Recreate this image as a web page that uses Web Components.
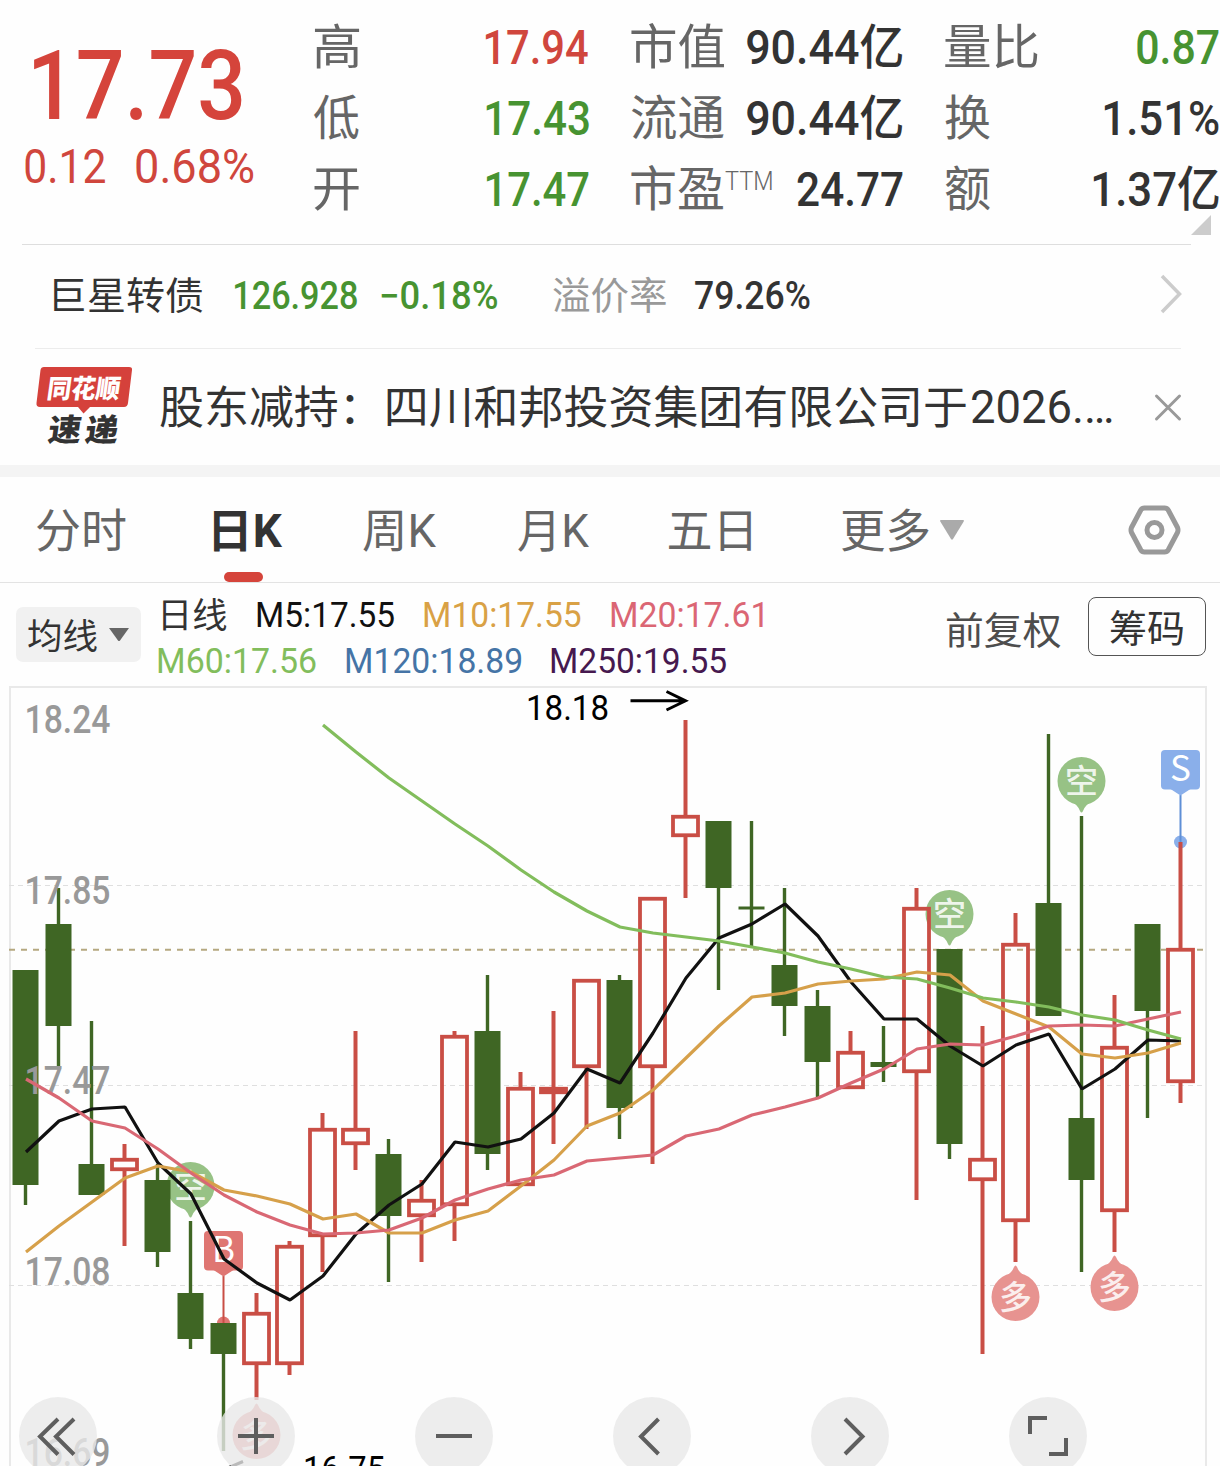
<!DOCTYPE html>
<html lang="zh-CN">
<head>
<meta charset="utf-8">
<title>日K</title>
<style>
  body {
    margin: 0;
    width: 1220px;
    height: 1466px;
    overflow: hidden;
    background: #fefefe;
    color: #333;
    font-family: Roboto, "Noto Sans CJK SC", sans-serif;
  }
</style>
</head>
<body>
<stock-page></stock-page>

<script>
/**
 * Creates a template element.
 *
 * @param {string} html - The markup of the template.
 * @returns {HTMLTemplateElement} The template.
 */
const createTemplate = (html) => {
  const template = document.createElement('template')
  template.innerHTML = html
  return template
}

const measureContext = document.createElement('canvas').getContext('2d')

/*
 * Text condensed or expanded to a given ink width.
 */
const fitTextTemplate = createTemplate(`
<style>
  :host { display: block; flex: none; white-space: nowrap; }
  span { display: inline-block; transform-origin: 0 50%; }
</style>
<span><slot></slot></span>
`)

customElements.define('fit-text',
  class extends HTMLElement {
    constructor () {
      super()
      this.attachShadow({ mode: 'open' })
      this.shadowRoot.appendChild(fitTextTemplate.content.cloneNode(true))
    }

    connectedCallback () {
      const style = getComputedStyle(this)
      measureContext.font = `${style.fontStyle} ${style.fontWeight} ${style.fontSize} ${style.fontFamily}`
      const metrics = measureContext.measureText(this.textContent)
      const ink = metrics.actualBoundingBoxLeft + metrics.actualBoundingBoxRight
      const width = Number(this.getAttribute('w'))
      const scale = width / ink
      this.style.width = `${width}px`
      this.shadowRoot.querySelector('span').style.transform =
        `translateX(${metrics.actualBoundingBoxLeft * scale}px) scaleX(${scale})`
    }
  })

/*
 * One label and value pair of the quote header.
 */
const statItemTemplate = createTemplate(`
<style>
  :host { display: flex; justify-content: space-between; height: 71px; line-height: 71px; font-size: 48px; font-weight: 500; color: #333; }
  :host([trend="up"]) { color: #d0463d; }
  :host([trend="down"]) { color: #479331; }
  .label { display: flex; color: #666; font-weight: 400; }
</style>
<div class="label"><slot name="label"></slot></div>
<slot></slot>
`)

customElements.define('stat-item',
  class extends HTMLElement {
    constructor () {
      super()
      this.attachShadow({ mode: 'open' })
      this.shadowRoot.appendChild(statItemTemplate.content.cloneNode(true))
    }
  })

/*
 * Price and key figures.
 */
const quoteHeaderTemplate = createTemplate(`
<style>
  :host { display: flex; height: 244px; position: relative; }
  .price { flex: none; width: 314px; color: #d0463d; }
  .last { margin-left: 34px; padding-top: 26px; height: 104px; line-height: 120px; font-size: 97px; font-weight: 500; color: #d5443b; }
  .change { display: flex; gap: 30px; padding-left: 25px; margin-top: 1px; line-height: 71px; font-size: 48px; font-weight: 450; }
  .col { flex: none; padding-top: 12px; width: 274.5px; margin-right: 42px; }
  .col:nth-of-type(3) { width: 272px; }
  .col:nth-of-type(4) { margin-right: 0; width: 274px; }
  .ttm { font-size: 25px; font-weight: 300; margin-left: 2px; line-height: 56px; }
  .corner { position: absolute; right: 9px; bottom: 9px; width: 20px; height: 20px; background: #ccc; clip-path: polygon(100% 0, 100% 100%, 0 100%); }
</style>
<div class="price">
  <div class="last"><fit-text w="207.5">17.73</fit-text></div>
  <div class="change"><fit-text w="80.5">0.12</fit-text><fit-text w="118">0.68%</fit-text></div>
</div>
<div class="col">
  <stat-item trend="up"><fit-text slot="label" w="45">高</fit-text><fit-text w="103.5">17.94</fit-text></stat-item>
  <stat-item trend="down"><fit-text slot="label" w="45">低</fit-text><fit-text w="103">17.43</fit-text></stat-item>
  <stat-item trend="down"><fit-text slot="label" w="45">开</fit-text><fit-text w="103">17.47</fit-text></stat-item>
</div>
<div class="col">
  <stat-item><fit-text slot="label" w="93">市值</fit-text><fit-text w="155.5">90.44亿</fit-text></stat-item>
  <stat-item><fit-text slot="label" w="93">流通</fit-text><fit-text w="155.5">90.44亿</fit-text></stat-item>
  <stat-item><fit-text slot="label" w="92">市盈</fit-text><fit-text slot="label" class="ttm" w="47">TTM</fit-text><fit-text w="106">24.77</fit-text></stat-item>
</div>
<div class="col">
  <stat-item trend="down"><fit-text slot="label" w="93">量比</fit-text><fit-text w="82">0.87</fit-text></stat-item>
  <stat-item><fit-text slot="label" w="45">换</fit-text><fit-text w="115">1.51%</fit-text></stat-item>
  <stat-item><fit-text slot="label" w="45">额</fit-text><fit-text w="126">1.37亿</fit-text></stat-item>
</div>
<div class="corner"></div>
`)

customElements.define('quote-header',
  class extends HTMLElement {
    constructor () {
      super()
      this.attachShadow({ mode: 'open' })
      this.shadowRoot.appendChild(quoteHeaderTemplate.content.cloneNode(true))
    }
  })

/*
 * Convertible bond row.
 */
const bondRowTemplate = createTemplate(`
<style>
  :host { display: flex; align-items: center; height: 103px; margin: 0 29px 0 22px; padding-left: 32px; border-top: 1px solid #dedede; line-height: 103px; font-size: 38px; color: #333; }
  .down { color: #479331; font-weight: 500; }
  .muted { color: #999; margin-left: 55px; }
  .rate { font-weight: 500; margin-left: 29px; }
  svg { margin-left: auto; margin-right: 8px; margin-top: -6px; }
</style>
<fit-text w="149">巨星转债</fit-text>
<fit-text class="down" w="122" style="margin-left: 32px">126.928</fit-text>
<fit-text class="down" w="116.5" style="margin-left: 24px">−0.18%</fit-text>
<fit-text class="muted" w="113.5">溢价率</fit-text>
<fit-text class="rate" w="115">79.26%</fit-text>
<svg width="24" height="40" viewBox="0 0 24 40" fill="none" stroke="#ccc" stroke-width="3.5"><path d="M3 2 20.500 20 3 38"/></svg>
`)

customElements.define('bond-row',
  class extends HTMLElement {
    constructor () {
      super()
      this.attachShadow({ mode: 'open' })
      this.shadowRoot.appendChild(bondRowTemplate.content.cloneNode(true))
    }
  })

/*
 * News row with the express logo.
 */
const newsRowTemplate = createTemplate(`
<style>
  :host { display: block; border-bottom: 12px solid #f4f4f4; }
  .row { display: flex; height: 116px; margin: 0 39px 0 35px; border-top: 1px solid #ececec; line-height: 116px; font-size: 45.5px; color: #333; }
  .logo { width: 97px; margin-right: 28px; padding-top: 18px; }
  .cjk { font-size: 45px; padding-top: 2px; }
  .date { margin-left: 6px; padding-top: 1px; }
  .close { margin-left: auto; align-self: center; }
  svg { display: block; overflow: visible; }
</style>
<div class="row">
  <div class="logo">
    <svg width="97" height="92" viewBox="35 367 97 92" font-family="Noto Sans CJK SC" font-weight="900">
      <path fill="#d5413b" d="M44 367H129Q132.500 367 132 370L128 403Q127.500 407 124 407H90L83.500 413.500 78 407H40Q36 407 36.500 403L40.500 370Q41 367 44 367Z"/>
      <text transform="translate(46 397.500) skewX(-8)" font-size="26" fill="#fff" textLength="73" lengthAdjust="spacingAndGlyphs">同花顺</text>
      <text transform="translate(47 441) skewX(-8)" font-size="31" fill="#333" textLength="33" lengthAdjust="spacingAndGlyphs">速</text>
      <text transform="translate(84 441) skewX(-8)" font-size="31" fill="#333" textLength="33" lengthAdjust="spacingAndGlyphs">递</text>
    </svg>
  </div>
  <fit-text class="cjk" w="806">股东减持：四川和邦投资集团有限公司于</fit-text>
  <fit-text class="date" w="140">2026.…</fit-text>
  <svg class="close" width="26" height="27" viewBox="0 0 26 27" stroke="#999" stroke-width="3" stroke-linecap="round"><path d="M1.500 2 24.500 25M24.500 2 1.500 25"/></svg>
</div>
`)

customElements.define('news-row',
  class extends HTMLElement {
    constructor () {
      super()
      this.attachShadow({ mode: 'open' })
      this.shadowRoot.appendChild(newsRowTemplate.content.cloneNode(true))
    }
  })

/*
 * Period tabs.
 */
const periodTabsTemplate = createTemplate(`
<style>
  :host { display: flex; height: 105px; padding: 0 39px 0 37px; border-bottom: 1px solid #e3e3e3; box-sizing: content-box; line-height: 109px; font-size: 46px; color: #666; }
  .active { position: relative; margin: 0 80px 0 88px; color: #333; font-weight: 700; }
  .active::after { content: ""; position: absolute; left: 10px; bottom: 0; width: 39px; height: 10px; border-radius: 5px; background: #d5443b; }
  svg { display: block; }
  .caret { margin: 43px 0 0 11px; }
  .gear { margin: 27px 0 0 auto; }
</style>
<fit-text w="89">分时</fit-text>
<div class="active"><fit-text w="68.5">日K</fit-text></div>
<fit-text w="73">周K</fit-text>
<fit-text w="71" style="margin-left: 82px">月K</fit-text>
<fit-text w="83" style="margin-left: 80px">五日</fit-text>
<fit-text w="87" style="margin-left: 90px">更多</fit-text>
<svg class="caret" width="24" height="20" viewBox="0 0 24 20"><path d="M1 0H23Q24.500 0 23.700 1.500L13 19Q12 20.500 11 19L.3 1.500Q-.5 0 1 0Z" fill="#aaa"/></svg>
<svg class="gear" width="53" height="52" viewBox="0 0 53 52" fill="none" stroke="#999" stroke-width="5" stroke-linejoin="round">
  <path d="M16.500 4H36.500Q39 4 40.200 6L49.500 23.500Q50.500 26 49.500 28.500L40.200 46Q39 48 36.500 48H16.500Q14 48 12.800 46L3.500 28.500Q2.500 26 3.500 23.500L12.800 6Q14 4 16.500 4Z"/>
  <circle cx="26.500" cy="26" r="7.500"/>
</svg>
`)

customElements.define('period-tabs',
  class extends HTMLElement {
    constructor () {
      super()
      this.attachShadow({ mode: 'open' })
      this.shadowRoot.appendChild(periodTabsTemplate.content.cloneNode(true))
    }
  })

/*
 * Moving average legend with its buttons.
 */
const averageBarTemplate = createTemplate(`
<style>
  :host { display: flex; height: 103px; padding: 0 14px 0 16px; font-size: 35px; color: #333; }
  .pick { display: flex; align-items: center; box-sizing: border-box; width: 125px; height: 55px; margin-top: 24px; padding: 0 12px; gap: 12px; border-radius: 7px; background: #f1f1f1; }
  .pick fit-text { line-height: 49px; padding-top: 6px; }
  .legend { width: 788px; padding: 10px 0 0 17px; line-height: 45px; }
  .legend div { display: flex; gap: 30px; font-weight: 450; }
  .name { margin-left: 5px; padding-top: 1px; font-weight: 400; }
  .adjust { margin: 16px 28px 0 1px; line-height: 64px; font-size: 38px; color: #4d4d4d; }
  .chips { box-sizing: border-box; width: 118px; height: 59px; margin-top: 14px; padding-left: 21px; border: 1px solid #555; border-radius: 8px; line-height: 62px; font-size: 38px; }
</style>
<div class="pick"><fit-text w="69">均线</fit-text><svg width="20" height="13" viewBox="0 0 20 13"><path d="M0 0H20L11 12.500Q10 13.500 9 12.500Z" fill="#666"/></svg></div>
<div class="legend">
  <div>
    <fit-text class="name" w="63.5">日线</fit-text>
    <fit-text w="137.500" style="color: #111">M5:17.55</fit-text>
    <fit-text w="157" style="color: #d9a145">M10:17.55</fit-text>
    <fit-text w="152" style="color: #db6674">M20:17.61</fit-text>
  </div>
  <div>
    <fit-text w="157.500" style="color: #82bd5c">M60:17.56</fit-text>
    <fit-text w="175.500" style="color: #4574a6">M120:18.89</fit-text>
    <fit-text w="175.500" style="color: #46194f">M250:19.55</fit-text>
  </div>
</div>
<fit-text class="adjust" w="113.5">前复权</fit-text>
<div class="chips"><fit-text w="73">筹码</fit-text></div>
`)

customElements.define('average-bar',
  class extends HTMLElement {
    constructor () {
      super()
      this.attachShadow({ mode: 'open' })
      this.shadowRoot.appendChild(averageBarTemplate.content.cloneNode(true))
    }
  })

// Candles from left to right: kind, high, body top, body bottom, low.
const CANDLES = [
  ['g', 970, 970, 1185, 1205], ['g', 888, 924, 1026, 1067], ['g', 1021, 1164, 1195, 1195],
  ['r', 1144, 1158, 1171, 1246], ['g', 1164, 1180, 1252, 1267], ['g', 1221, 1293, 1339, 1349],
  ['g', 1323, 1323, 1354, 1451], ['r', 1293, 1312, 1365, 1400], ['r', 1241, 1245, 1365, 1375],
  ['r', 1113, 1128, 1237, 1272], ['r', 1031, 1128, 1145, 1170], ['g', 1139, 1154, 1216, 1282],
  ['r', 1180, 1199, 1217, 1262], ['r', 1031, 1035, 1206, 1241], ['g', 975, 1031, 1154, 1170],
  ['r', 1072, 1087, 1186, 1186], ['r', 1011, 1087, 1094, 1144], ['r', 979, 979, 1068, 1129],
  ['g', 975, 980, 1108, 1139], ['r', 897, 897, 1068, 1164], ['r', 720, 815, 837, 898],
  ['g', 821, 821, 888, 990], ['g', 821, 906.5, 909.5, 947], ['g', 888, 965, 1006, 1036],
  ['g', 990, 1006, 1062, 1098], ['r', 1031, 1051, 1089, 1089], ['g', 1026, 1062, 1067, 1082],
  ['r', 888, 907, 1073, 1200], ['g', 949, 949, 1144, 1159], ['r', 1026, 1158, 1181, 1354],
  ['r', 913, 943, 1222, 1262], ['g', 734, 903, 1016, 1016], ['g', 816, 1118, 1180, 1272],
  ['r', 995, 1046, 1212, 1252], ['g', 924, 924, 1011, 1118], ['r', 842, 948, 1083, 1103]
]

// Moving averages: colour, first candle, values.
const AVERAGES = [
  ['#111', 0, [1152, 1121, 1109, 1107, 1163, 1194, 1259, 1283, 1300, 1276, 1234, 1205, 1184, 1142, 1147, 1139, 1113, 1069, 1083, 1033, 978, 938, 924, 904, 936, 982, 1019, 1019, 1046, 1066, 1045, 1034, 1089, 1069, 1040, 1041]],
  ['#d6a04a', 0, [1252, 1226, 1202, 1178, 1166, 1172, 1190, 1196, 1204, 1219, 1214, 1233, 1233, 1220, 1211, 1186, 1160, 1126, 1113, 1090, 1058, 1026, 997, 993, 984, 981, 979, 972, 975, 1001, 1014, 1027, 1054, 1058, 1053, 1043]],
  ['#d96874', 0, [1079, 1098, 1121, 1128, 1149, 1173, 1195, 1212, 1225, 1234, 1233, 1230, 1218, 1200, 1189, 1180, 1175, 1161, 1158, 1155, 1136, 1129, 1115, 1107, 1098, 1083, 1069, 1049, 1044, 1045, 1036, 1026, 1025, 1026, 1019, 1012]],
  ['#82bd5c', 9, [725, 752, 778, 801, 824, 846, 870, 892, 911, 927, 933, 937, 941, 947, 953, 962, 969, 977, 979, 988, 998, 1002, 1007, 1015, 1020, 1030, 1039]]
]

/**
 * Gets the centre of a candle.
 *
 * @param {number} index - The index of the candle.
 * @returns {number} The x coordinate.
 */
const centerOf = (index) => 25.5 + index * 33

/**
 * Draws one candle.
 *
 * @param {Array} candle - Kind, high, top, bottom and low.
 * @param {number} index - The index of the candle.
 * @returns {string} The svg markup.
 */
const drawCandle = ([kind, high, top, bottom, low], index) => {
  const x = centerOf(index)
  if (kind === 'g') {
    return `<path d="M${x} ${high}V${low}" stroke="#3f6624" stroke-width="3.400"/><rect x="${x - 13}" y="${top}" width="26" height="${bottom - top}" fill="#3f6624"/>`
  }
  return `<path d="M${x} ${high}V${top}M${x} ${bottom}V${low}" stroke="#c94e45" stroke-width="4"/><rect x="${x - 12.5}" y="${top + 1.75}" width="25" height="${bottom - top - 3.5}" fill="none" stroke="#c94e45" stroke-width="3.800"/>`
}

/**
 * Draws a signal pin, pointing down for short and up for long.
 *
 * @param {number} x - The centre.
 * @param {number} y - The centre.
 * @param {string} text - The character in the pin.
 * @returns {string} The svg markup.
 */
const drawPin = (x, y, text) => {
  const dir = text === '空' ? 1 : -1
  const fill = dir === 1 ? '#97c285' : '#e79390'
  return `<circle cx="${x}" cy="${y}" r="24" fill="${fill}"/>
    <path transform="translate(${x} ${y}) scale(1 ${dir})" d="M-13 19Q-4 23-1.500 30Q0 33 1.500 30Q4 23 13 19Z" fill="${fill}"/>
    <text x="${x}" y="${y + 12}" text-anchor="middle" font-family="Noto Sans CJK SC" font-weight="500" font-size="33" fill="#fff" fill-opacity=".85">${text}</text>`
}

/**
 * Draws a trade flag with its stem and dot.
 *
 * @param {number} x - The centre.
 * @param {number} y - The top.
 * @param {number} dot - The y coordinate of the dot.
 * @param {string} text - The letter.
 * @param {string} fill - The colour of the flag.
 * @param {string} stem - The colour of the stem.
 * @returns {string} The svg markup.
 */
const drawFlag = (x, y, dot, text, fill, stem) => `
  <circle cx="${x}" cy="${dot}" r="6.500" fill="${fill}"/>
  <path d="M${x} ${y + 45}V${dot}" stroke="${stem}" stroke-width="2"/>
  <rect x="${x - 19.5}" y="${y}" width="39" height="39.500" rx="4" fill="${fill}"/>
  <path d="M${x - 10} ${y + 39}H${x + 10}L${x} ${y + 45.5}Z" fill="${fill}"/>
  <text x="${x}" y="${y + 31}" text-anchor="middle" font-family="Noto Sans CJK SC" font-size="35" fill="#fff">${text}</text>`

/**
 * Draws a price text of the given width.
 *
 * @param {number} x - The left edge.
 * @param {number} y - The baseline.
 * @param {string} text - The price.
 * @param {number} width - The width of the text.
 * @returns {string} The svg markup.
 */
const drawPrice = (x, y, text, width = 86) => `<text x="${x}" y="${y}" textLength="${width}" lengthAdjust="spacingAndGlyphs">${text}</text>`

/*
 * The candlestick chart.
 */
customElements.define('k-chart',
  class extends HTMLElement {
    constructor () {
      super()
      this.attachShadow({ mode: 'open' })
    }

    connectedCallback () {
      this.shadowRoot.innerHTML = `
<style>
  :host { display: block; height: 780px; }
  svg { display: block; }
</style>
<svg width="1220" height="780" viewBox="0 686 1220 780" font-family="Roboto, 'Noto Sans CJK SC', sans-serif">
  <path d="M10 1470V687H1206V1470" fill="none" stroke="#e9e9e9" stroke-width="2"/>
  <path d="M9 885.500H1206M9 1085.500H1206M9 1285.500H1206" stroke="#dfdfdf" stroke-width="1.200" stroke-dasharray="5 4"/>
  <path d="M9 949.800H1206" stroke="#b5a880" stroke-width="2" stroke-dasharray="6 6"/>
  ${drawPin(949.5, 914, '空')}${drawPin(1081.5, 781, '空')}${drawPin(190.5, 1186, '空')}
  ${drawPin(1015.5, 1297, '多')}${drawPin(1114.5, 1287, '多')}${drawPin(256.5, 1435, '多')}
  ${drawFlag(223.5, 1231, 1323, 'B', '#df7672', '#c94e45')}
  ${drawFlag(1180.5, 750, 842, 'S', '#8aafea', '#5e8fd6')}
  ${CANDLES.map(drawCandle).join('')}
  <g font-size="38" font-weight="500" fill="#999">
    ${drawPrice(24.5, 732.5, '18.24')}${drawPrice(24.5, 904, '17.85')}${drawPrice(24.5, 1094, '17.47')}${drawPrice(24.5, 1285, '17.08')}${drawPrice(24.5, 1465.5, '16.69')}
  </g>
  <g fill="none" stroke-width="3.200" stroke-linejoin="bevel">
    ${AVERAGES.map(([color, first, values]) => `<polyline stroke="${color}" points="${values.map((y, i) => `${centerOf(first + i) + 0.5},${y}`).join(' ')}"/>`).join('')}
  </g>
  <g font-size="35" fill="#000">
    ${drawPrice(526, 720, '18.18', 83)}${drawPrice(303, 1480.5, '16.75', 82)}
  </g>
  <path d="M630.500 700.800H685M666.500 691.500 685.500 700.800 666.500 710" fill="none" stroke="#000" stroke-width="3"/>
  <path d="M229 1467.500 243 1461.500" stroke="#000" stroke-width="3"/>
</svg>`
    }
  })

/*
 * Round button that floats over the chart.
 */
const roundButtonTemplate = createTemplate(`
<style>
  :host { display: block; width: 78px; height: 78px; border-radius: 50%; background: rgba(233, 233, 233, .8); }
  svg { display: block; }
</style>
<svg width="78" height="78" viewBox="-39 -39 78 78" fill="none" stroke="#5e5e5e" stroke-width="4"><path/></svg>
`)

customElements.define('round-button',
  class extends HTMLElement {
    constructor () {
      super()
      this.attachShadow({ mode: 'open' })
      this.shadowRoot.appendChild(roundButtonTemplate.content.cloneNode(true))
    }

    connectedCallback () {
      this.shadowRoot.querySelector('path').setAttribute('d', this.getAttribute('icon'))
    }
  })

/*
 * The whole page.
 */
const stockPageTemplate = createTemplate(`
<style>
  :host { display: block; position: relative; width: 1220px; height: 1466px; overflow: hidden; }
  .tools { position: absolute; left: 19px; top: 1397px; display: flex; gap: 120px; }
</style>
<quote-header></quote-header>
<bond-row></bond-row>
<news-row></news-row>
<period-tabs></period-tabs>
<average-bar></average-bar>
<k-chart></k-chart>
<div class="tools">
  <round-button icon="M0-17-18 .5 0 18.500M16-17-2 .5 16 18.500"></round-button>
  <round-button icon="M-18 0H18M0-18V18"></round-button>
  <round-button icon="M-18 0H18"></round-button>
  <round-button icon="M6.500-17-11 .5 6.500 18"></round-button>
  <round-button icon="M-5-17 12.500 .5-5 18"></round-button>
  <round-button icon="M-18-2V-18H-1M18 2V18H1"></round-button>
</div>
`)

customElements.define('stock-page',
  class extends HTMLElement {
    constructor () {
      super()
      this.attachShadow({ mode: 'open' })
      this.shadowRoot.appendChild(stockPageTemplate.content.cloneNode(true))
    }
  })
</script>
</body>
</html>
